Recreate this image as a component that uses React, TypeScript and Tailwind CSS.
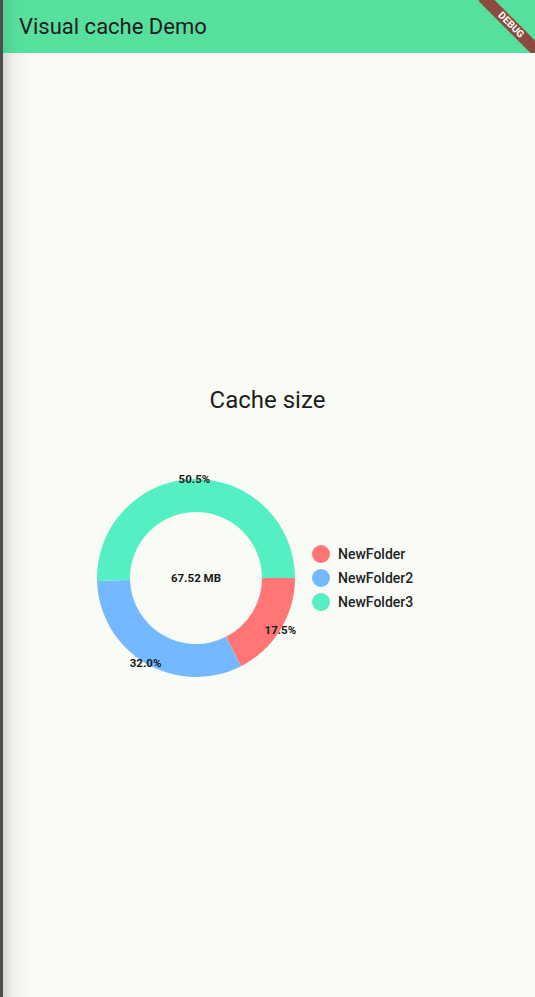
import React from "react";

const CX = 110;
const CY = 110;
const R = 99;
const r = 66;

function pt(rad: number, deg: number) {
  const a = (deg * Math.PI) / 180;
  return [CX + rad * Math.cos(a), CY + rad * Math.sin(a)];
}

function arc(a0: number, a1: number) {
  const [x0, y0] = pt(R, a0);
  const [x1, y1] = pt(R, a1);
  const [x2, y2] = pt(r, a1);
  const [x3, y3] = pt(r, a0);
  const large = a1 - a0 > 180 ? 1 : 0;
  return `M${x0} ${y0} A${R} ${R} 0 ${large} 1 ${x1} ${y1} L${x2} ${y2} A${r} ${r} 0 ${large} 0 ${x3} ${y3} Z`;
}

const segs = [
  { name: "NewFolder", pct: 17.5, color: "#ff7675" },
  { name: "NewFolder2", pct: 32.0, color: "#74b9ff" },
  { name: "NewFolder3", pct: 50.5, color: "#55efc4" },
];

export default function App() {
  let acc = 0;
  const parts = segs.map((s) => {
    const a0 = acc;
    const a1 = acc + (s.pct / 100) * 360;
    acc = a1;
    const mid = (a0 + a1) / 2;
    const [lx, ly] = pt(R, mid);
    return { ...s, d: arc(a0, a1), lx, ly };
  });

  return (
    <div
      className="flex w-[535px] h-[997px] overflow-hidden"
      style={{ fontFamily: "Roboto, 'Liberation Sans', sans-serif" }}
    >
      <div className="w-[3px] h-full bg-[#4d4d4d] shrink-0" />
      <div className="flex flex-col flex-1 h-full relative">
        <div className="h-[53px] shrink-0 bg-[linear-gradient(to_right,#4fcf91,#57df9e_14px)] flex items-center pl-[16px] relative overflow-hidden">
          <span className="text-[22px] text-[#1d1d1d] leading-none">Visual cache Demo</span>
          <div className="absolute top-[18.5px] right-[-15.5px] w-[80px] h-[12px] bg-[#8c4a3e] rotate-45 flex items-center justify-center">
            <span className="text-[10px] font-bold text-white leading-none">DEBUG</span>
          </div>
        </div>
        <div className="flex-1 flex flex-col items-center bg-[linear-gradient(to_right,#d4d6d2,#eef0ec_10px,#f9fbf7_28px)]">
          <div className="mt-[332px] text-[24px] leading-[30px] text-[#1d1d1d] -ml-[3px]">Cache size</div>
          <div className="mt-[53px] self-start ml-[83px] flex items-center">
            <svg width="220" height="220" viewBox="0 0 220 220">
              {parts.map((p) => (
                <path key={p.name} d={p.d} fill={p.color} />
              ))}
              <text x={CX} y={CY + 4} textAnchor="middle" fontSize="11.5" fontWeight="700" fill="#1a1a1a">
                67.52 MB
              </text>
              {parts.map((p) => (
                <text
                  key={p.name + "l"}
                  x={p.lx}
                  y={p.ly + 4}
                  textAnchor="middle"
                  fontSize="11.5"
                  fontWeight="700"
                  fill="#1a1a1a"
                >
                  {p.pct.toFixed(1)}%
                </text>
              ))}
            </svg>
            <div className="flex flex-col gap-[6px] ml-[6px]">
              {segs.map((s) => (
                <div key={s.name} className="flex items-center h-[18px]">
                  <div className="w-[18px] h-[18px] rounded-full" style={{ backgroundColor: s.color }} />
                  <span className="ml-[8px] text-[14px] font-medium text-[#222]">{s.name}</span>
                </div>
              ))}
            </div>
          </div>
        </div>
      </div>
    </div>
  );
}
